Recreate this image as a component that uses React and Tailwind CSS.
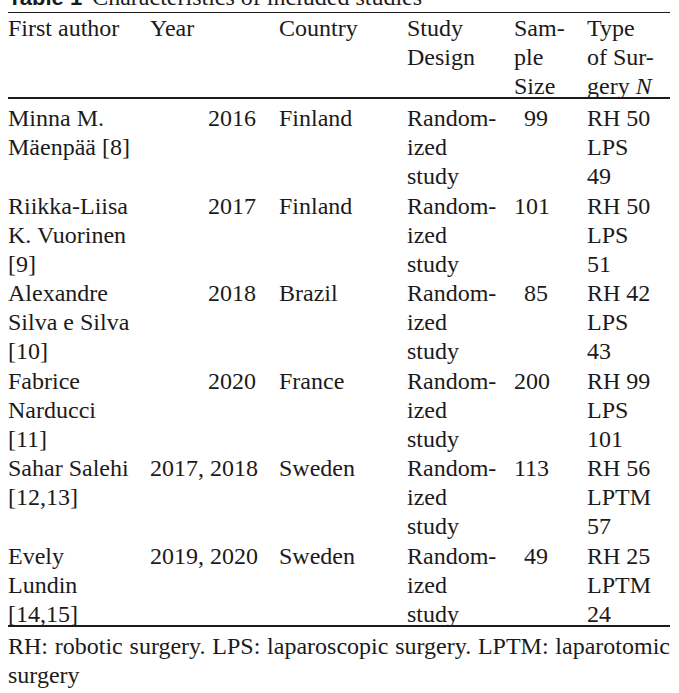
import React from "react";

const rows = [
  { author: ["Minna M.", "Mäenpää [8]"], year: "2016", country: "Finland", n: "99", type: ["RH 50", "LPS", "49"] },
  { author: ["Riikka-Liisa", "K. Vuorinen", "[9]"], year: "2017", country: "Finland", n: "101", type: ["RH 50", "LPS", "51"] },
  { author: ["Alexandre", "Silva e Silva", "[10]"], year: "2018", country: "Brazil", n: "85", type: ["RH 42", "LPS", "43"] },
  { author: ["Fabrice", "Narducci", "[11]"], year: "2020", country: "France", n: "200", type: ["RH 99", "LPS", "101"] },
  { author: ["Sahar Salehi", "[12,13]"], year: "2017, 2018", country: "Sweden", n: "113", type: ["RH 56", "LPTM", "57"] },
  { author: ["Evely", "Lundin", "[14,15]"], year: "2019, 2020", country: "Sweden", n: "49", type: ["RH 25", "LPTM", "24"] },
];

const cols = "grid grid-cols-[142px_129px_128px_107px_73px_83px] whitespace-nowrap";

function Lines({ items }) {
  return items.map((t, i) => <div key={i}>{t}</div>);
}

export default function App() {
  return (
    <div className="w-[679px] h-[693px] overflow-hidden bg-white pl-[8px] text-[#1c1a1b] font-['Liberation_Serif',serif] text-[24px] leading-[29.2px]">
      <div className="mt-[-17px] h-[29px] whitespace-nowrap">
        <span className="font-['Liberation_Sans',sans-serif] font-bold text-[22px]">Table 1</span>
        <span className="ml-[10px]">Characteristics of included studies</span>
      </div>

      <div className="w-[662px]">
        <div className={`${cols} border-t border-[#1c1a1b] h-[84px] border-b-2 box-content`}>
          <div className="mt-[1px]">First author</div>
          <div className="mt-[1px]">Year</div>
          <div className="mt-[1px]">Country</div>
          <div className="mt-[1px]">Study<br />Design</div>
          <div className="mt-[1px]">Sam-<br />ple<br />Size</div>
          <div className="mt-[1px]">Type<br />of Sur-<br />gery <i>N</i></div>
        </div>

        <div className="h-[521px] pt-[5px] border-b-2 border-[#1c1a1b] box-content">
          {rows.map((r, i) => (
            <div key={i} className={`${cols} h-[87.5px]`}>
              <div><Lines items={r.author} /></div>
              <div className="text-right pr-[23px]">{r.year}</div>
              <div>{r.country}</div>
              <div><Lines items={["Random-", "ized", "study"]} /></div>
              <div className="text-right pr-[39px]">{r.n}</div>
              <div><Lines items={r.type} /></div>
            </div>
          ))}
        </div>

        <p className="mt-[5px] w-[662px] text-justify">
          RH: robotic surgery. LPS: laparoscopic surgery. LPTM: laparotomic surgery
        </p>
      </div>
    </div>
  );
}
